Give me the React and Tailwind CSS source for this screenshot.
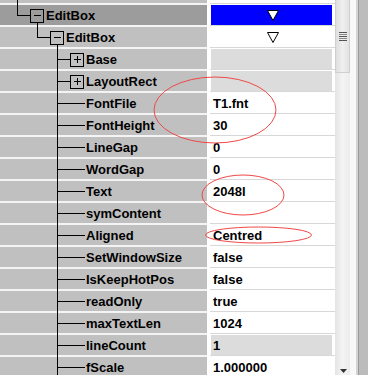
import React from 'react';

const rows = [
  { label: 'EditBox', level: 0, box: 'minus', selected: true, kind: 'blue' },
  { label: 'EditBox', level: 1, box: 'minus', kind: 'tri' },
  { label: 'Base', level: 2, box: 'plus', kind: 'gray' },
  { label: 'LayoutRect', level: 2, box: 'plus', kind: 'gray' },
  { label: 'FontFile', level: 2, value: 'T1.fnt' },
  { label: 'FontHeight', level: 2, value: '30' },
  { label: 'LineGap', level: 2, value: '0' },
  { label: 'WordGap', level: 2, value: '0' },
  { label: 'Text', level: 2, value: '2048l' },
  { label: 'symContent', level: 2, value: '' },
  { label: 'Aligned', level: 2, value: 'Centred' },
  { label: 'SetWindowSize', level: 2, value: 'false' },
  { label: 'IsKeepHotPos', level: 2, value: 'false' },
  { label: 'readOnly', level: 2, value: 'true' },
  { label: 'maxTextLen', level: 2, value: '1024' },
  { label: 'lineCount', level: 2, value: '1', kind: 'gray' },
  { label: 'fScale', level: 2, value: '1.000000' },
];

const font = { fontFamily: '"Liberation Sans", Arial, sans-serif' };

function Box({ x, plus }) {
  return (
    <div className="absolute top-[6px] w-[14px] h-[14px] border border-black" style={{ left: x }}>
      <div className="absolute left-[3px] top-[5px] w-[7px] h-[1px] bg-black" />
      {plus && <div className="absolute left-[6px] top-[2px] w-[1px] h-[7px] bg-black" />}
    </div>
  );
}

function Tree({ row }) {
  if (row.level === 0) {
    return (
      <>
        <div className="absolute left-[17px] top-0 w-[1px] h-[13px] bg-black" />
        <div className="absolute left-[17px] top-[12px] w-[13px] h-[1px] bg-black" />
        <Box x={30} />
        <div className="absolute left-[37px] top-[20px] w-[1px] h-[2px] bg-black" />
      </>
    );
  }
  if (row.level === 1) {
    return (
      <>
        <div className="absolute left-[37px] top-0 w-[1px] h-[13px] bg-black" />
        <div className="absolute left-[37px] top-[12px] w-[13px] h-[1px] bg-black" />
        <Box x={50} />
        <div className="absolute left-[57px] top-[20px] w-[1px] h-[2px] bg-black" />
      </>
    );
  }
  return (
    <>
      <div className="absolute left-[57px] top-0 w-[1px] h-[22px] bg-black" />
      {row.box ? (
        <>
          <div className="absolute left-[57px] top-[12px] w-[13px] h-[1px] bg-black" />
          <Box x={70} plus />
        </>
      ) : (
        <div className="absolute left-[57px] top-[12px] w-[28px] h-[1px] bg-black" />
      )}
    </>
  );
}

function Triangle() {
  return (
    <svg width="12" height="11" viewBox="0 0 12 11">
      <polygon points="0.5,0.5 11.5,0.5 6,10.5" fill="#fff" stroke="#000" strokeWidth="1" />
    </svg>
  );
}

function ValueCell({ row }) {
  let cls = 'h-[20px] w-[121px] flex items-center pl-[2px] text-black';
  if (row.kind === 'blue') cls += ' bg-[#0000ff] justify-center pl-0';
  if (row.kind === 'tri') cls += ' justify-center pl-0';
  if (row.kind === 'gray') cls += ' bg-[#dcdcdc]';
  return (
    <div className={cls}>
      {row.kind === 'blue' || row.kind === 'tri' ? <Triangle /> : <span className="pt-[1px]">{row.value}</span>}
    </div>
  );
}

function Row({ row }) {
  const indent = row.level === 0 ? 'pl-[46px]' : row.level === 1 ? 'pl-[66px]' : 'pl-[86px]';
  return (
    <div className="flex h-[22px] shrink-0">
      <div className="relative w-[207px] flex flex-col">
        <div className="h-[2px] bg-[#f4f4f4]" />
        <div className={`h-[20px] flex items-center whitespace-nowrap overflow-hidden ${indent} ${row.selected ? 'bg-[#9c9c9c]' : 'bg-[#c0c0c0]'}`}>
          <span className="pt-[1px]">{row.label}</span>
        </div>
        <Tree row={row} />
      </div>
      <div className="w-[128px] flex flex-col bg-white">
        <div className="h-[1px] ml-[3px] bg-[#d8d8d8]" />
        <div className="h-[1px]" />
        <div className="pl-[4px]">
          <ValueCell row={row} />
        </div>
      </div>
    </div>
  );
}

export default function App() {
  return (
    <div className="relative w-[368px] h-[375px] overflow-hidden bg-white text-[13px] font-bold text-black" style={font}>
      <div className="flex h-full">
        <div className="w-[335px] flex flex-col">
          <div className="flex h-[22px] shrink-0 mt-[-19px]">
            <div className="relative w-[207px] flex flex-col">
              <div className="h-[2px] bg-[#f4f4f4]" />
              <div className="h-[20px] bg-[#c0c0c0]" />
              <div className="absolute left-[17px] top-0 w-[1px] h-[22px] bg-black" />
            </div>
            <div className="w-[128px] bg-white" />
          </div>
          {rows.map((r, i) => (
            <Row key={i} row={r} />
          ))}
        </div>
        <div className="relative w-[15px] h-full bg-gradient-to-r from-[#e4e4e4] via-[#f4f4f4] to-[#ececec]">
          <div className="h-[73px] border-x border-b border-[#cfcfcf] bg-gradient-to-r from-[#dedede] via-[#f0f0f0] to-[#e2e2e2] flex items-center justify-center">
            <div className="flex flex-col gap-[1px] mt-[1px]">
              <div className="w-[8px] h-[1px] bg-[#555]" />
              <div className="w-[8px] h-[1px] bg-[#888]" />
              <div className="w-[8px] h-[1px] bg-[#555]" />
              <div className="w-[8px] h-[1px] bg-[#888]" />
              <div className="w-[8px] h-[1px] bg-[#555]" />
            </div>
          </div>
          <svg className="absolute left-[5px] top-[369px]" width="7" height="4" viewBox="0 0 7 4">
            <polygon points="0,0 7,0 3.5,4" fill="#333" />
          </svg>
        </div>
        <div className="w-[6px] h-full bg-[#f8f8f8]" />
        <div className="w-[2px] h-full bg-[#d4d4d4]" />
        <div className="w-[1px] h-full bg-[#9a9a9a]" />
        <div className="flex-1 h-full bg-[#bcbcbc]" />
      </div>
      <svg className="absolute inset-0 pointer-events-none" width="368" height="375">
        <ellipse cx="215" cy="110" rx="61" ry="33" fill="none" stroke="#f04848" strokeWidth="1" />
        <ellipse cx="243" cy="195" rx="41" ry="20" fill="none" stroke="#f04848" strokeWidth="1" />
        <ellipse cx="258.5" cy="235" rx="53" ry="8" fill="none" stroke="#f04848" strokeWidth="1" />
      </svg>
    </div>
  );
}
